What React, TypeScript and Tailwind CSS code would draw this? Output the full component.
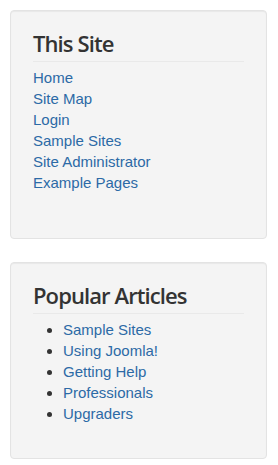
import React from "react";

const siteLinks = ["Home", "Site Map", "Login", "Sample Sites", "Site Administrator", "Example Pages"];
const popular = ["Sample Sites", "Using Joomla!", "Getting Help", "Professionals", "Upgraders"];

function Heading({ children }: { children: React.ReactNode }) {
  return (
    <h3 className="m-0 pb-[5px] border-b border-[#e9e9e9] text-[22px] leading-[26px] font-semibold tracking-[-0.9px] text-[#333333] [font-family:'Open_Sans',sans-serif]">
      {children}
    </h3>
  );
}

export default function App() {
  return (
    <div className="bg-white w-[278px] min-h-[465px] pt-[10px] [font-family:'Liberation_Sans',Arial,sans-serif]">
      <div className="ml-[10px] w-[257px] rounded-[4px] border border-[#e3e3e3] bg-[#f4f4f4] shadow-[inset_0_1px_1px_rgba(0,0,0,0.05)] pl-[22px] pr-[22px] pt-[19px] pb-[45px]">
        <Heading>This Site</Heading>
        <ul className="mt-[5px] m-0 p-0 list-none">
          {siteLinks.map((l) => (
            <li key={l} className="text-[15px] leading-[21px]">
              <a href="#" className="text-[#2c6aa6]">{l}</a>
            </li>
          ))}
        </ul>
      </div>
      <div className="ml-[10px] mt-[23px] w-[257px] rounded-[4px] border border-[#e3e3e3] bg-[#f4f4f4] shadow-[inset_0_1px_1px_rgba(0,0,0,0.05)] pl-[22px] pr-[22px] pt-[19px] pb-[34px]">
        <Heading>Popular Articles</Heading>
        <ul className="mt-[5px] m-0 pl-[30px] list-disc text-[#333333]">
          {popular.map((l) => (
            <li key={l} className="text-[15px] leading-[21px]">
              <a href="#" className="text-[#2c6aa6]">{l}</a>
            </li>
          ))}
        </ul>
      </div>
    </div>
  );
}
